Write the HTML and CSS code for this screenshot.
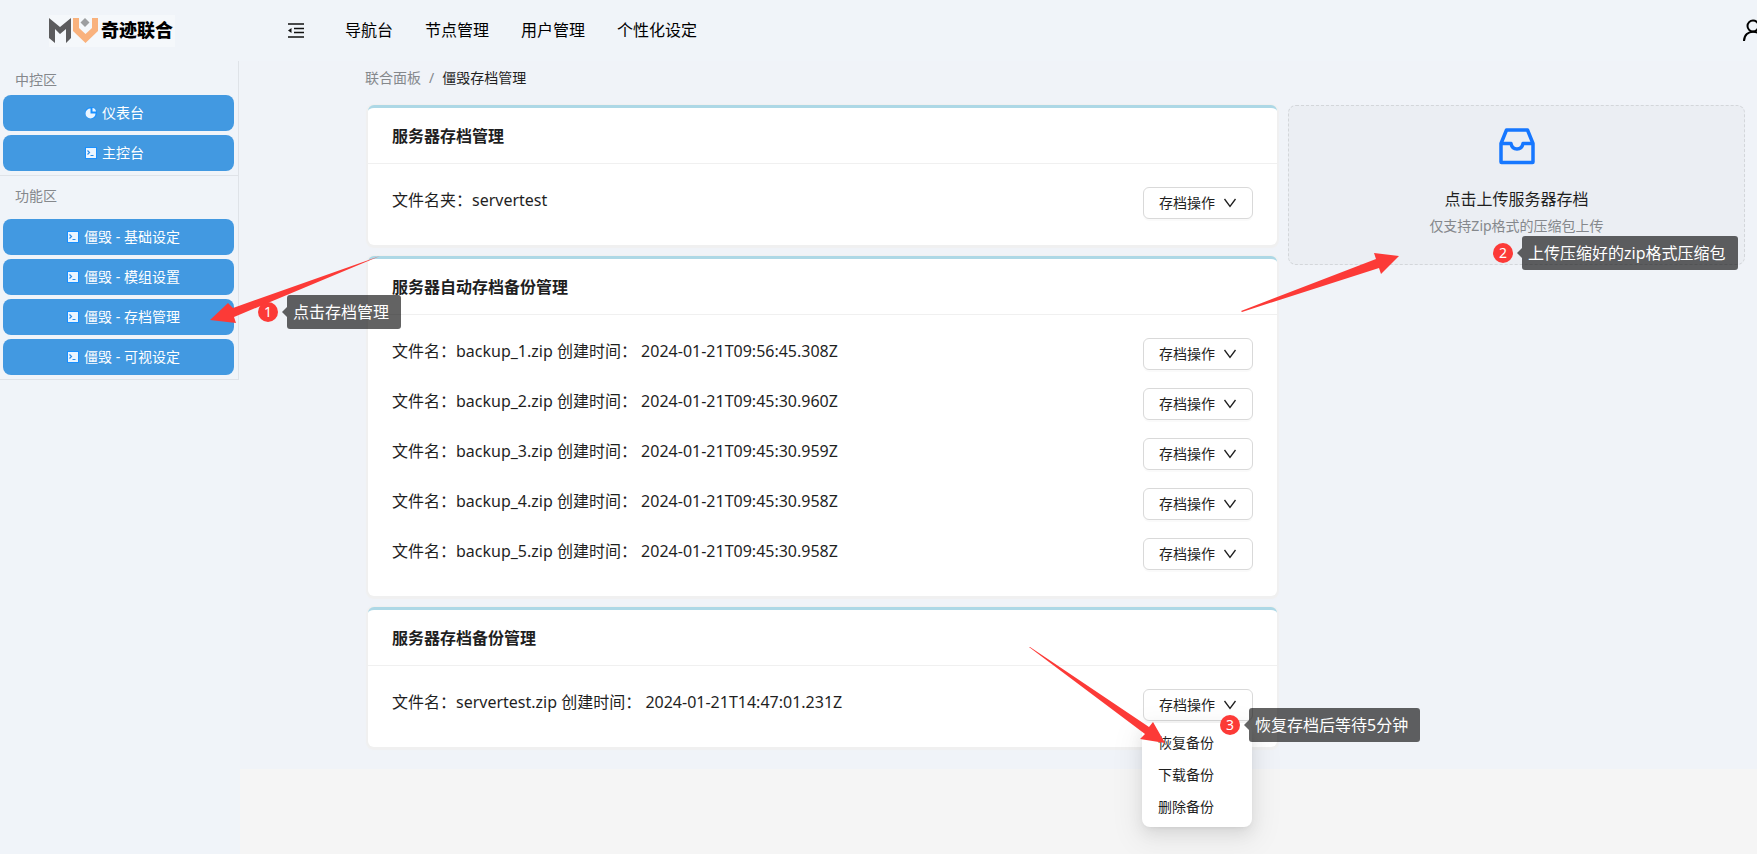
FILE: index.html
```html
<!DOCTYPE html>
<html lang="zh-CN">
<head>
<meta charset="utf-8">
<title>僵毁存档管理</title>
<link rel="stylesheet" href="styles.css">
</head>
<body>
<svg class="defs" aria-hidden="true">
  <symbol id="console" viewBox="0 0 12 12"><rect x="0" y="0" width="12" height="12" fill="#1890ff"/><rect x="1" y="1" width="10" height="10" fill="#eaf5ff"/><path d="M2.500 3.500 4.500 5.500 2.500 7.500M5.500 8.500h3" fill="none" stroke="#2b8de8" stroke-width="1.200"/></symbol>
  <symbol id="down" viewBox="0 0 14 14"><path d="M1.500 3 7 10.500 12.500 3" fill="none" stroke="currentColor" stroke-width="1.300"/></symbol>
</svg>
<header class="header">
  <a class="logo" href="#">
    <svg class="logo-mark" viewBox="0 0 50 26" aria-hidden="true">
      <path d="M0 0 11 9 22 0V20L17 25V11L11 16 6 11V25L0 20Z" fill="#5b5b5d"/>
      <path d="M24 0H30V10L36.500 16 43 10V0H49V13L36.500 25 24 13Z" fill="#f9b27d"/>
      <path d="M36 0 40.500 4.500 36 9 31.500 4.500Z" fill="#9c9ea0"/>
    </svg>
    <span class="logo-text">奇迹联合</span>
  </a>
  <button class="fold" type="button" aria-label="收起菜单">
    <svg viewBox="0 0 16 15" width="16" height="15"><path d="M0 1h16M6 5.500h10M6 9.500h10M0 14h16" stroke="#111" stroke-width="1.500"/><path d="M0 7.500 3.500 5v5Z" fill="#111"/></svg>
  </button>
  <nav class="nav"><a href="#">导航台</a><a href="#">节点管理</a><a href="#">用户管理</a><a href="#">个性化设定</a></nav>
  <button class="user" type="button" aria-label="用户">
    <svg viewBox="0 0 20 24" width="20" height="24"><circle cx="10" cy="7" r="5.500" fill="none" stroke="#000" stroke-width="2"/><path d="M1 22C1 9.500 19 9.500 19 22" fill="none" stroke="#000" stroke-width="2"/></svg>
  </button>
</header>
<div class="layout">
  <aside class="sidebar">
    <section class="group">
      <h2 class="group-title">中控区</h2>
      <button class="side-btn" type="button"><svg viewBox="0 0 12 12"><circle cx="6" cy="6" r="6" fill="#1890ff"/><path d="M5.500 1.500V6.500H10.500A5 5 0 1 1 5.500 1.500Z" fill="#eaf5ff"/><path d="M7.500 1A4 4 0 0 1 11 4.500H7.500Z" fill="#eaf5ff"/></svg>仪表台</button>
      <button class="side-btn" type="button"><svg><use href="#console"/></svg>主控台</button>
    </section>
    <section class="group group-tall">
      <h2 class="group-title">功能区</h2>
      <button class="side-btn" type="button"><svg><use href="#console"/></svg>僵毁 - 基础设定</button>
      <button class="side-btn" type="button"><svg><use href="#console"/></svg>僵毁 - 模组设置</button>
      <button class="side-btn" type="button"><svg><use href="#console"/></svg>僵毁 - 存档管理</button>
      <button class="side-btn" type="button"><svg><use href="#console"/></svg>僵毁 - 可视设定</button>
    </section>
  </aside>
  <div class="content">
    <main class="main">
      <nav class="crumbs"><a href="#">联合面板</a><span>/</span><b>僵毁存档管理</b></nav>
      <div class="columns">
        <div class="cards">
          <section class="card">
            <h3>服务器存档管理</h3>
            <div class="rows">
              <div class="row"><p>文件名夹：servertest</p><button class="op" type="button">存档操作<svg><use href="#down"/></svg></button></div>
            </div>
          </section>
          <section class="card">
            <h3>服务器自动存档备份管理</h3>
            <div class="rows">
              <div class="row"><p>文件名：backup_1.zip 创建时间： 2024-01-21T09:56:45.308Z</p><button class="op" type="button">存档操作<svg><use href="#down"/></svg></button></div>
              <div class="row"><p>文件名：backup_2.zip 创建时间： 2024-01-21T09:45:30.960Z</p><button class="op" type="button">存档操作<svg><use href="#down"/></svg></button></div>
              <div class="row"><p>文件名：backup_3.zip 创建时间： 2024-01-21T09:45:30.959Z</p><button class="op" type="button">存档操作<svg><use href="#down"/></svg></button></div>
              <div class="row"><p>文件名：backup_4.zip 创建时间： 2024-01-21T09:45:30.958Z</p><button class="op" type="button">存档操作<svg><use href="#down"/></svg></button></div>
              <div class="row"><p>文件名：backup_5.zip 创建时间： 2024-01-21T09:45:30.958Z</p><button class="op" type="button">存档操作<svg><use href="#down"/></svg></button></div>
            </div>
          </section>
          <section class="card">
            <h3>服务器存档备份管理</h3>
            <div class="rows">
              <div class="row"><p>文件名：servertest.zip 创建时间： 2024-01-21T14:47:01.231Z</p>
                <div class="dropdown">
                  <button class="op" type="button">存档操作<svg><use href="#down"/></svg></button>
                  <div class="menu"><button type="button">恢复备份</button><button type="button">下载备份</button><button type="button">删除备份</button></div>
                </div>
              </div>
            </div>
          </section>
        </div>
        <button class="upload" type="button">
          <svg viewBox="0 0 48 48" width="48" height="48"><path d="M13.500 8H34.500L40 21.500V40Q40 40.500 39.500 40.500H8.500Q8 40.500 8 40V21.500ZM8 21.500H18Q19 27 24 27T30 21.500H40" fill="none" stroke="#1677ff" stroke-width="3.500" stroke-linejoin="round"/></svg>
          <span class="upload-text">点击上传服务器存档</span>
          <span class="upload-hint">仅支持Zip格式的压缩包上传</span>
        </button>
      </div>
    </main>
  </div>
</div>
<svg class="arrows" aria-hidden="true">
  <path d="M380 256 233 308 228 303 210 320 236 323 234 317Z"/>
  <path d="M1241 311 1376 259 1374 253 1399 256 1381 274 1379 268 1242 312Z"/>
  <path d="M1030 647 1149 727 1153 722 1165 743 1140 739 1145 734 1029 647Z"/>
</svg>
<div class="note note-1"><i>1</i><span>点击存档管理</span></div>
<div class="note note-2"><i>2</i><span>上传压缩好的zip格式压缩包</span></div>
<div class="note note-3"><i>3</i><span>恢复存档后等待5分钟</span></div>
</body>
</html>
```
FILE: styles.css
```css
* { box-sizing: border-box; }
body {
  margin: 0;
  min-height: 100vh;
  display: flex;
  flex-direction: column;
  position: relative;
  overflow-x: hidden;
  background: #f0f4f9;
  color: #1f1f1f;
  font: 14px/22px "Noto Sans", "Noto Sans CJK SC", sans-serif;
}
button { font: inherit; color: inherit; border: 0; background: none; padding: 0; }
a { color: inherit; text-decoration: none; }
h2, h3, p { margin: 0; }
.defs { position: absolute; width: 0; height: 0; }

.header { display: flex; align-items: center; height: 61px; padding-left: 49px; overflow: hidden; color: #000; }
.logo { display: flex; align-items: center; width: 126px; height: 32px; background: #f5f8fb; flex: none; }
.logo-mark { width: 50px; height: 26px; flex: none; }
.logo-text { font: 900 18px/28px "Noto Sans CJK SC", sans-serif; white-space: nowrap; margin-left: 2px; padding-bottom: 4px; }
.fold { margin-left: 113px; height: 15px; display: flex; }
.nav { display: flex; gap: 32px; margin-left: 41px; padding-bottom: 2px; font-size: 16px; }
.user { margin-left: auto; margin-right: -6px; height: 24px; display: flex; flex: none; }

.layout { display: flex; flex: 1; }
.sidebar { width: 239px; flex: none; align-self: flex-start; border-right: 1px solid #dfe3e8; }
.group { display: flex; flex-direction: column; gap: 4px; padding: 8px 4px 4px 3px; border-bottom: 1px solid #dfe3e8; }
.group-title { font-weight: 400; font-size: 14px; line-height: 22px; color: #85888c; padding-left: 12px; }
.group-tall .group-title { padding: 3px 0 10px 12px; line-height: 18px; }
.side-btn { height: 36px; padding-right: 8px; border-radius: 8px; background: #4299e1; color: #fff; display: flex; align-items: center; justify-content: center; gap: 5px; }
.group-tall .side-btn { padding: 0 0 0 10px; }
.side-btn svg { width: 12px; height: 12px; }

.content { flex: 1; min-width: 0; margin-left: 1px; background: #f5f5f5; }
.main { background: #f0f3f8; padding: 6px 12px 22px 125px; }
.crumbs { display: flex; gap: 8px; color: #85888c; margin-bottom: 16px; }
.crumbs b { font-weight: 400; color: #1f1f1f; }
.columns { display: grid; grid-template-columns: 909fr 457fr; gap: 11px; align-items: start; padding-left: 3px; }
.cards { display: flex; flex-direction: column; gap: 11px; }
.card { background: #fff; border-top: 3px solid #add8e6; border-radius: 6px; box-shadow: 0 1px 1px 2px #f0f0f0; }
.card h3 { font-size: 16px; line-height: 53px; font-weight: 700; padding: 2px 24px 0; border-bottom: 1px solid #f0f0f0; }
.rows { display: flex; flex-direction: column; gap: 18px; padding: 23px 24px 26px; }
.row { display: flex; justify-content: space-between; align-items: flex-start; height: 32px; }
.row p { font-size: 16px; line-height: 26px; }
.op { display: flex; align-items: center; gap: 8px; height: 32px; padding: 0 15px; border: 1px solid #d9d9d9; border-radius: 6px; background: #fff; box-shadow: 0 2px 0 rgba(0,0,0,.02); }
.op svg { width: 14px; height: 14px; }
.dropdown { position: relative; }
.menu { position: absolute; top: 34px; left: -1px; width: 110px; padding: 4px; display: flex; flex-direction: column; background: #fff; border-radius: 8px; box-shadow: 0 6px 16px rgba(0,0,0,.08), 0 3px 6px -4px rgba(0,0,0,.12), 0 9px 28px 8px rgba(0,0,0,.05); z-index: 1; }
.menu button { height: 32px; padding: 0 12px; text-align: left; }

.upload { display: flex; flex-direction: column; align-items: center; padding: 16px 0 27px; border: 1px dashed #d3d6da; border-radius: 8px; background: #ebeef3; }
.upload-text { margin-top: 17px; font-size: 16px; line-height: 25px; }
.upload-hint { margin-top: 3px; color: #85888c; }

.arrows { position: absolute; top: 0; left: 0; width: 100%; height: 100%; fill: #fc3a37; pointer-events: none; z-index: 2; }
.note { position: absolute; z-index: 3; display: flex; align-items: center; gap: 9px; color: #fff; font-size: 16px; white-space: nowrap; }
.note i { width: 20px; height: 20px; border-radius: 50%; background: #fc3a37; font-style: normal; font-size: 14px; line-height: 20px; text-align: center; }
.note span { position: relative; padding: 0 12px 0 6px; line-height: 34px; border-radius: 3px; background: rgba(0,0,0,.61); }
.note span::before { content: ""; position: absolute; right: 100%; top: 12px; border: 5px solid transparent; border-left: 0; border-right-color: rgba(0,0,0,.61); }
.note-1 { left: 258px; top: 295px; }
.note-2 { left: 1493px; top: 236px; }
.note-3 { left: 1220px; top: 708px; }
```
